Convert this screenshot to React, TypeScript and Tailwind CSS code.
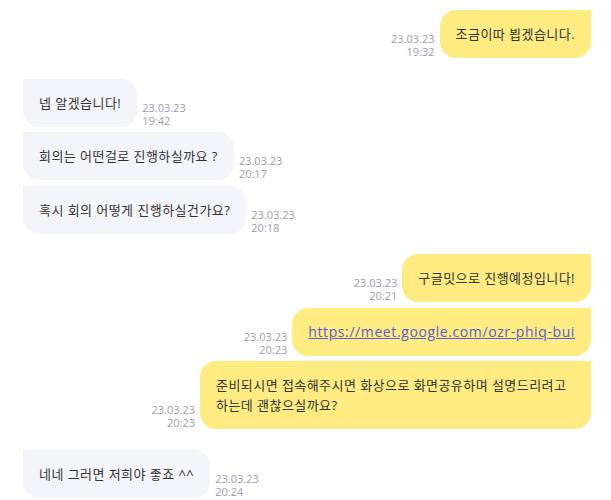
import React from "react";

type Msg = {
  mine: boolean;
  text: string;
  time: string;
  link?: boolean;
  gap?: boolean;
};

const messages: Msg[] = [
  { mine: true, text: "조금이따 뵙겠습니다.", time: "19:32" },
  { mine: false, text: "넵 알겠습니다!", time: "19:42", gap: true },
  { mine: false, text: "회의는 어떤걸로 진행하실까요 ?", time: "20:17" },
  { mine: false, text: "혹시 회의 어떻게 진행하실건가요?", time: "20:18" },
  { mine: true, text: "구글밋으로 진행예정입니다!", time: "20:21", gap: true },
  {
    mine: true,
    text: "https://meet.google.com/ozr-phiq-bui",
    time: "20:23",
    link: true,
  },
  {
    mine: true,
    text: "준비되시면 접속해주시면 화상으로 화면공유하며 설명드리려고 하는데 괜찮으실까요?",
    time: "20:23",
  },
  { mine: false, text: "네네 그러면 저희야 좋죠 ^^", time: "20:24", gap: true },
];

function Stamp({ time, mine }: { time: string; mine: boolean }) {
  return (
    <div
      className={`flex flex-col text-[11px] leading-[13px] text-[#9d9dad] shrink-0 ${
        mine ? "items-end" : "items-start"
      }`}
    >
      <span>23.03.23</span>
      <span>{time}</span>
    </div>
  );
}

function Bubble({ msg }: { msg: Msg }) {
  return (
    <div
      className={`flex items-end gap-[5px] ${msg.mine ? "justify-end" : "justify-start"} ${
        msg.gap ? "mt-[20.5px]" : "mt-[5.5px]"
      }`}
    >
      {msg.mine && <Stamp time={msg.time} mine />}
      <div
        className={`px-4 py-[14px] text-[13px] leading-[20px] tracking-[0.45px] break-keep text-[#333333] max-w-[391px] ${
          msg.mine
            ? "bg-[#feec82] rounded-2xl rounded-tr-none"
            : "bg-[#f4f5f9] rounded-2xl rounded-tl-none"
        }`}
      >
        {msg.link ? (
          <a href="#" className="text-[#5b5bd6] underline text-[14px] tracking-[0.6px]">
            {msg.text}
          </a>
        ) : (
          msg.text
        )}
      </div>
      {!msg.mine && <Stamp time={msg.time} mine={false} />}
    </div>
  );
}

export default function App() {
  return (
    <div
      className="w-[611px] h-[500px] overflow-hidden bg-white pl-[23px] pr-[20px] pt-[4.5px]"
      style={{ fontFamily: '"Open Sans", "Noto Sans CJK KR", sans-serif' }}
    >
      {messages.map((m, i) => (
        <Bubble key={i} msg={m} />
      ))}
    </div>
  );
}
